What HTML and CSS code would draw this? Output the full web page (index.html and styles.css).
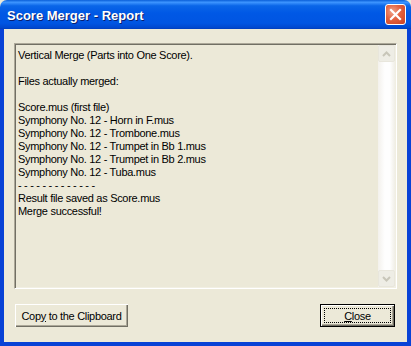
FILE: index.html
```html
<!DOCTYPE html>
<html lang="en">
<head>
    <meta charset="UTF-8">
    <title>Score Merger - Report</title>
    <link rel="stylesheet" href="styles.css">
</head>
<body>
    <div class="window">
        <div class="titlebar">
            <span class="title">Score Merger - Report</span>
            <div class="close-x">
                <svg width="13" height="13" viewBox="0 0 13 13">
                    <path d="M2 2 L11 11 M11 2 L2 11" stroke="#fff" stroke-width="2.2" stroke-linecap="square"/>
                </svg>
            </div>
        </div>
        <div class="client">
            <div class="report">
                <div class="report-text">
                    <div>Vertical Merge (Parts into One Score).</div>
                    <div>&nbsp;</div>
                    <div>Files actually merged:</div>
                    <div>&nbsp;</div>
                    <div>Score.mus (first file)</div>
                    <div>Symphony No. 12 - Horn in F.mus</div>
                    <div>Symphony No. 12 - Trombone.mus</div>
                    <div>Symphony No. 12 - Trumpet in Bb 1.mus</div>
                    <div>Symphony No. 12 - Trumpet in Bb 2.mus</div>
                    <div>Symphony No. 12 - Tuba.mus</div>
                    <div>- - - - - - - - - - - - -</div>
                    <div>Result file saved as Score.mus</div>
                    <div>Merge successful!</div>
                </div>
                <div class="scrollbar">
                    <div class="arrow">
                        <svg width="9" height="6" viewBox="0 0 9 6">
                            <path d="M1 5 L4.5 1.5 L8 5" fill="none" stroke="#c8c6b9" stroke-width="2"/>
                        </svg>
                    </div>
                    <div class="track"></div>
                    <div class="arrow">
                        <svg width="9" height="6" viewBox="0 0 9 6">
                            <path d="M1 1 L4.5 4.5 L8 1" fill="none" stroke="#c8c6b9" stroke-width="2"/>
                        </svg>
                    </div>
                </div>
            </div>
            <div class="buttons">
                <button class="btn copy">Cop<u>y</u> to the Clipboard</button>
                <button class="btn close default"><span class="focus"><u>C</u>lose</span></button>
            </div>
        </div>
    </div>
</body>
</html>
```

FILE: styles.css
```css
body {
    margin: 0;
    background-color: #ece9d8;
    font-family: "Liberation Sans", Arial, sans-serif;
    font-size: 11px;
}

.window {
    width: 411px;
    height: 346px;
    display: flex;
    flex-direction: column;
    box-sizing: border-box;
}

.titlebar {
    height: 29px;
    display: flex;
    align-items: center;
    justify-content: space-between;
    padding: 0 5px 0 7px;
    border-radius: 7px 7px 0 0;
    background: linear-gradient(to bottom, #0a5fd8 0%, #3d95ff 8%, #0a66e8 20%, #0058e5 45%, #0055e2 80%, #0048cf 95%, #003dbb 100%);
}

.title {
    font-weight: bold;
    font-size: 13px;
    color: #fff;
    text-shadow: 1px 1px 0 #0a1e6e;
    margin-top: 2px;
}

.close-x {
    width: 21px;
    height: 21px;
    box-sizing: border-box;
    border: 1px solid #fff;
    border-radius: 3px;
    background: radial-gradient(circle at 35% 35%, #f0a38a 0%, #e2613f 45%, #cc4020 100%);
    display: flex;
    align-items: center;
    justify-content: center;
}

.client {
    flex: 1;
    display: flex;
    flex-direction: column;
    border: 4px solid #0842d6;
    border-top: none;
    padding: 14px 10px 0 10px;
}

.report {
    height: 246px;
    display: flex;
    box-sizing: border-box;
    border-top: 1px solid #aca899;
    border-left: 1px solid #aca899;
    border-right: 1px solid #fff;
    border-bottom: 1px solid #fff;
    box-shadow: inset 1px 1px 0 #716f64, inset -1px -1px 0 #f1efe2;
}

.report-text {
    flex: 1;
    padding: 5px 0 0 3px;
    line-height: 13px;
    letter-spacing: -0.3px;
    color: #000;
    white-space: nowrap;
}

.scrollbar {
    width: 17px;
    margin: 1px 1px 1px 0;
    display: flex;
    flex-direction: column;
    background: linear-gradient(to right, #f3f1ec 0%, #fefefe 40%, #fefefe 70%, #f0eee6 100%);
}

.arrow {
    height: 17px;
    box-sizing: border-box;
    border: 1px solid #e8e6dc;
    border-radius: 2px;
    background: #eeede5;
    display: flex;
    align-items: center;
    justify-content: center;
}

.track {
    flex: 1;
}

.buttons {
    display: flex;
    justify-content: space-between;
    margin-top: 15px;
    padding: 0 2px 0 1px;
}

.btn {
    height: 23px;
    box-sizing: border-box;
    font-family: "Liberation Sans", Arial, sans-serif;
    font-size: 11px;
    letter-spacing: -0.3px;
    color: #000;
    background-color: #ece9d8;
    border: none;
    padding: 0;
    white-space: nowrap;
    box-shadow: inset 1px 1px 0 #fff, inset -1px -1px 0 #716f64, inset -2px -2px 0 #aca899;
}

.copy {
    width: 113px;
}

.close {
    width: 75px;
    display: flex;
    align-items: stretch;
}

.close.default {
    box-shadow: inset 0 0 0 1px #000, inset 2px 2px 0 #fff, inset -2px -2px 0 #716f64, inset -3px -3px 0 #aca899;
}

.focus {
    flex: 1;
    margin: 4px;
    border: 1px dotted #000;
    display: flex;
    align-items: center;
    justify-content: center;
}
```
